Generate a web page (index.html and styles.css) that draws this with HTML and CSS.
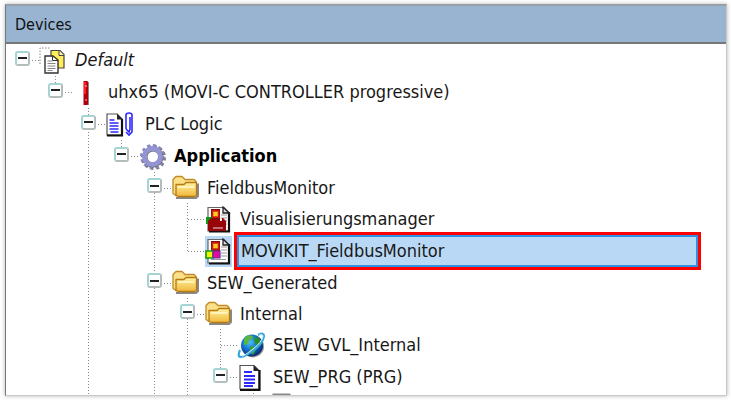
FILE: index.html
```html
<!DOCTYPE html>
<html lang="en">
<head>
  <meta charset="UTF-8" />
  <meta name="viewport" content="width=device-width, initial-scale=1.0" />
  <title>Devices</title>
  <link rel="stylesheet" href="styles.css">
</head>
<body>

  <!-- Shared icons -->
  <svg class="sprite" aria-hidden="true">
    <defs>
      <linearGradient id="gold" x1="0" y1="0" x2="0" y2="1">
        <stop offset="0" stop-color="#fff2a0" />
        <stop offset="1" stop-color="#f0b83c" />
      </linearGradient>
      <radialGradient id="sea" cx="0.4" cy="0.35" r="0.65">
        <stop offset="0" stop-color="#4cc0f4" />
        <stop offset="0.55" stop-color="#1272cc" />
        <stop offset="1" stop-color="#082a70" />
      </radialGradient>
      <symbol id="folder" viewBox="0 0 27 24">
        <path d="M4 22.500h20l2-2V8" fill="none" stroke="#888" stroke-width="2" />
        <path d="M1 4l3-3h6l3 3h9l2 2v14H4L1 18z" fill="#fbe08a" stroke="#c08a24" stroke-width="1.300" stroke-linejoin="round" />
        <path d="M4 9h8l2-2h10.500v13l-2 1H6.500L4 20z" fill="url(#gold)" stroke="#b57a12" stroke-width="1.300" stroke-linejoin="round" />
        <path d="M6 11.500h16.500" stroke="#fffbd0" stroke-width="1.500" />
      </symbol>
      <symbol id="page" viewBox="0 0 27 27">
        <path d="M2 1.500h14l5 5V25H2z" fill="#fff" stroke="#555" stroke-width="1.200" />
        <path d="M21.500 6v20H2" fill="none" stroke="#111" stroke-width="2.200" />
        <path d="M15.500 1l6 6h-6z" fill="#222" />
        <path d="M6 8h8M6 12h11M6 15.500h11M6 19h11M6 22h9" stroke="#2c28ff" stroke-width="1.900" />
      </symbol>
      <symbol id="blocks" viewBox="0 0 27 27">
        <path d="M3 1.500h16l5 5V25H3z" fill="#fff" stroke="#666" stroke-width="1.200" />
        <path d="M24 6v19.500H4" fill="none" stroke="#111" stroke-width="2.200" />
        <path d="M18 1v6h6z" fill="#ddd" stroke="#222" stroke-width="1.300" />
        <path d="M16 9h6M16 12h6M16 15h6M16 18h6M6 21.500h15" stroke="#999" stroke-width="1" />
        <path d="M6 3h9v12H6z" fill="#8c0808" />
        <path d="M7.500 5h6v6h-6z" fill="#ffc928" stroke="#d02010" stroke-width="1.500" />
      </symbol>
    </defs>
  </svg>

  <main class="panel">
    <h1 class="panel-title">Devices</h1>

    <ul class="tree">
      <li class="root">
        <div class="row">
          <button class="toggle" aria-label="Collapse Default"></button>
          <svg class="icon" viewBox="0 0 27 27">
            <path d="M0 17V1h11" fill="none" stroke="#888" stroke-dasharray="1.500 1.500" />
            <path d="M11 3.500h9l4 4V21H11z" fill="#ffee58" stroke="#444" stroke-width="1.200" />
            <path d="M19 3.500v5h5" fill="#fff8b0" stroke="#444" />
            <path d="M5 9h8l5 4v13H5z" fill="#fff" stroke="#333" stroke-width="1.400" />
            <path d="M12.500 9v4.500H18" fill="none" stroke="#333" />
            <path d="M7.500 14h5M7.500 16.500h8M7.500 19h8M7.500 21.500h8M7.500 23.500h5" stroke="#888" />
          </svg>
          <span class="label project">Default</span>
        </div>
        <ul>
          <li class="last">
            <div class="row">
              <button class="toggle" aria-label="Collapse uhx65"></button>
              <svg class="icon" viewBox="0 0 27 27">
                <path d="M10.500 2h4l1 2v21l-1 1h-4z" fill="#b00010" />
                <path d="M11 3h2v12h-2z" fill="#ff2020" />
                <path d="M12 7h2M12 21h2" stroke="#ffb0b0" />
                <path d="M15.500 3v23" stroke="#888" />
              </svg>
              <span class="label">uhx65 (MOVI-C CONTROLLER progressive)</span>
            </div>
            <ul>
              <li>
                <div class="row">
                  <button class="toggle" aria-label="Collapse PLC Logic"></button>
                  <svg class="icon wide" viewBox="0 0 31 27">
                    <path d="M1 3h10l5 5v16H1z" fill="#fff" stroke="#555" stroke-width="1.200" />
                    <path d="M16 8v16.500H1" fill="none" stroke="#111" stroke-width="2.200" />
                    <path d="M11 2.500v6h6z" fill="#222" />
                    <path d="M3.500 9h5M3.500 12h9M3.500 15h9M3.500 18h9M4.500 21h8" stroke="#2c28ff" stroke-width="1.700" />
                    <path d="M20 18V4q0-2 3-2t3 2v17l-3 3-3-3M20 18l3 3 1-3V6" fill="none" stroke="#2c28ff" stroke-width="1.600" />
                  </svg>
                  <span class="label">PLC Logic</span>
                </div>
                <ul>
                  <li class="last">
                    <div class="row">
                      <button class="toggle" aria-label="Collapse Application"></button>
                      <svg class="icon" viewBox="0 0 27 27">
                        <circle cx="14.500" cy="14.500" r="11" fill="none" stroke="#777" stroke-width="3" stroke-dasharray="2.900 2.860" />
                        <circle cx="13.500" cy="13.500" r="11" fill="none" stroke="#8888c8" stroke-width="3" stroke-dasharray="2.900 2.860" />
                        <circle cx="14" cy="14" r="8" fill="none" stroke="#666" stroke-width="5" />
                        <circle cx="13.500" cy="13.500" r="8" fill="none" stroke="#9494d2" stroke-width="5" />
                      </svg>
                      <span class="label app">Application</span>
                    </div>
                    <ul>
                      <li>
                        <div class="row folder">
                          <button class="toggle" aria-label="Collapse FieldbusMonitor"></button>
                          <svg class="icon"><use href="#folder" /></svg>
                          <span class="label">FieldbusMonitor</span>
                        </div>
                        <ul>
                          <li>
                            <div class="row leaf">
                              <svg class="icon" viewBox="0 0 27 27">
                                <use href="#blocks" />
                                <path d="M1 11h6v7H1z" fill="#0c9a18" />
                                <path d="M3 15l3-3h1v3h10v-3h1l3 3v10H3z" fill="#980408" />
                                <path d="M8 22h10" stroke="#ddd" />
                              </svg>
                              <span class="label">Visualisierungsmanager</span>
                            </div>
                          </li>
                          <li class="last">
                            <div class="row leaf selected">
                              <svg class="icon" viewBox="0 0 27 27">
                                <use href="#blocks" />
                                <path d="M1 13h7v7H1z" fill="#f4f400" stroke="#0c9a18" stroke-width="1.600" />
                                <path d="M8 13h7v7H8z" fill="#e808a0" stroke="#6030a0" stroke-width="1.200" />
                              </svg>
                              <span class="label">MOVIKIT_FieldbusMonitor</span>
                            </div>
                          </li>
                        </ul>
                      </li>
                      <li>
                        <div class="row folder">
                          <button class="toggle" aria-label="Collapse SEW_Generated"></button>
                          <svg class="icon"><use href="#folder" /></svg>
                          <span class="label">SEW_Generated</span>
                        </div>
                        <ul>
                          <li>
                            <div class="row folder">
                              <button class="toggle" aria-label="Collapse Internal"></button>
                              <svg class="icon"><use href="#folder" /></svg>
                              <span class="label">Internal</span>
                            </div>
                            <ul>
                              <li>
                                <div class="row leaf">
                                  <svg class="icon" viewBox="0 0 27 27">
                                    <circle cx="15" cy="14.500" r="11" fill="#999" />
                                    <circle cx="14" cy="13.500" r="11" fill="url(#sea)" />
                                    <path d="M6 7l4-4 5 1-1 3-3 1-1 4-4 1z" fill="#58b838" />
                                    <path d="M17 5l4 1 3 5-3 3-3-1-2-4z" fill="#289028" />
                                    <path d="M12 14l5 1 1 3-3 5-3-3z" fill="#38a038" />
                                    <path d="M20 3q6-3 6 1-1 7-10 14T3 25q-4 0-1-7" fill="none" stroke="#38a8dc" stroke-width="2.200" />
                                    <path d="M21 3q4-1 4 1-1 6-10 13T4 24" fill="none" stroke="#d8f4ff" />
                                  </svg>
                                  <span class="label">SEW_GVL_Internal</span>
                                </div>
                              </li>
                              <li class="last">
                                <div class="row">
                                  <button class="toggle" aria-label="Collapse SEW_PRG"></button>
                                  <svg class="icon"><use href="#page" /></svg>
                                  <span class="label">SEW_PRG (PRG)</span>
                                </div>
                                <ul>
                                  <li>
                                    <div class="row leaf">
                                      <svg class="icon" viewBox="0 4 27 27">
                                        <path d="M3 3h15l4 4v20H3z" fill="#fff" stroke="#888" stroke-width="3" />
                                      </svg>
                                    </div>
                                  </li>
                                </ul>
                              </li>
                            </ul>
                          </li>
                        </ul>
                      </li>
                    </ul>
                  </li>
                </ul>
              </li>
            </ul>
          </li>
        </ul>
      </li>
    </ul>
  </main>

  <script>
    document.querySelectorAll(".toggle").forEach(btn => {
      btn.onclick = () => btn.closest("li").classList.toggle("collapsed");
    });
  </script>
</body>
</html>
```
FILE: styles.css
```css
:root {
  --title: #99b4d1;
  --line: #888;
  --select: #b9d8f5;
  --indent: 33px;
}

* {
  box-sizing: border-box;
}

body {
  margin: 0;
  padding: 4px 4px 4px 5px;
  height: 100vh;
  background: white;
  color: #181818;
  font-family: "DejaVu Sans Condensed", Tahoma, sans-serif;
  font-size: 18px;
}

.sprite {
  position: absolute;
  width: 0;
  height: 0;
}

.panel {
  height: 100%;
  overflow: hidden;
  background: white;
  border-left: 1px solid #777;
  border-top: 2px solid #999fa6;
  border-right: 1px solid #c8c8c8;
  border-bottom: 1px solid #c8c8c8;
  box-shadow: 0 0 4px rgba(0,0,0,0.3);
}

.panel-title {
  margin: 0;
  padding: 0 9px;
  height: 38px;
  line-height: 38px;
  background: var(--title);
  border-bottom: 2px solid #777;
  color: #111;
  font-size: 16px;
  font-weight: normal;
}

ul {
  list-style: none;
  margin: 0;
  padding: 0 0 0 var(--indent);
}

.tree {
  padding: 0 0 0 9px;
}

/* dotted line down the left side of each branch */
li {
  background: repeating-linear-gradient(to bottom, var(--line) 0 1px, transparent 1px 3px) 7px 0 / 1px 100% no-repeat;
}

li.last {
  background-size: 1px 16px;
}

li.root {
  background: none;
}

li.collapsed > ul {
  display: none;
}

.row {
  display: flex;
  align-items: center;
  height: 32px;
  background: repeating-linear-gradient(to right, var(--line) 0 1px, transparent 1px 3px) 8px 16px / 18px 1px no-repeat;
}

.row.folder {
  height: 31px;
}

.toggle {
  width: 15px;
  height: 15px;
  margin: 0 10px 4px 0;
  padding: 0 3px;
  background: white;
  border: 2px solid #a4d4d4;
  border-right-color: #b4bcbc;
  border-bottom-color: #b4bcbc;
  border-radius: 3px;
  cursor: pointer;
}

.toggle::before {
  content: "";
  display: block;
  height: 2px;
  margin: 0 -2px;
  background: #222;
}

.icon {
  flex: none;
  width: 27px;
  height: 27px;
  margin-right: 8px;
  overflow: visible;
}

.icon.wide {
  width: 31px;
}

.leaf .icon {
  margin-left: 25px;
}

.label {
  line-height: 30px;
  white-space: nowrap;
}

.project {
  font-style: italic;
}

.app {
  color: black;
  font-weight: bold;
}

.selected .icon {
  height: 31px;
  margin-right: 5px;
  background: var(--select);
}

.selected .label {
  flex: 1;
  height: 32px;
  line-height: 28px;
  margin-right: 28px;
  padding: 0 2px;
  background: var(--select);
  border: 2px solid #3090e4;
  outline: 3px solid red;
}
```
